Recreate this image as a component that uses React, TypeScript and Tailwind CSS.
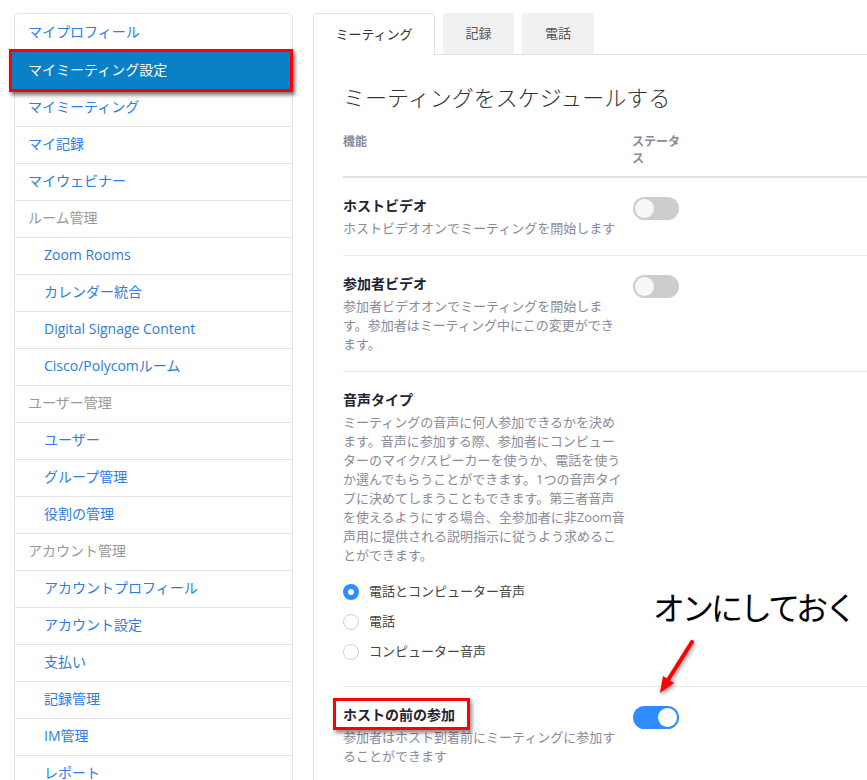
import { ReactNode } from "react";

type NavItem = { label: string; kind: "link" | "group" | "sub"; active?: boolean };

const navItems: NavItem[] = [
  { label: "マイプロフィール", kind: "link" },
  { label: "マイミーティング設定", kind: "link", active: true },
  { label: "マイミーティング", kind: "link" },
  { label: "マイ記録", kind: "link" },
  { label: "マイウェビナー", kind: "link" },
  { label: "ルーム管理", kind: "group" },
  { label: "Zoom Rooms", kind: "sub" },
  { label: "カレンダー統合", kind: "sub" },
  { label: "Digital Signage Content", kind: "sub" },
  { label: "Cisco/Polycomルーム", kind: "sub" },
  { label: "ユーザー管理", kind: "group" },
  { label: "ユーザー", kind: "sub" },
  { label: "グループ管理", kind: "sub" },
  { label: "役割の管理", kind: "sub" },
  { label: "アカウント管理", kind: "group" },
  { label: "アカウントプロフィール", kind: "sub" },
  { label: "アカウント設定", kind: "sub" },
  { label: "支払い", kind: "sub" },
  { label: "記録管理", kind: "sub" },
  { label: "IM管理", kind: "sub" },
  { label: "レポート", kind: "sub" },
];

const Sidebar = () => (
  <ul className="w-[279px] shrink-0 border border-[#e3e3e3] rounded-t-[5px] text-[14px]">
    {navItems.map((item, i) => {
      if (item.active) {
        return (
          <li key={item.label} className="relative h-[37px]">
            <div className="absolute -left-[6px] -right-px -top-[4px] -bottom-[2px] border-[3px] border-[#ff0000] bg-[#0a80c6] shadow-[2px_3px_4px_rgba(0,0,0,0.55)] flex items-center pl-[16px] pb-[2px] text-white">
              {item.label}
            </div>
          </li>
        );
      }
      const color = item.kind === "group" ? "text-[#999999]" : "text-[#2b7de4]";
      const pad = item.kind === "sub" ? "pl-[29px]" : "pl-[13px]";
      const h = i === 0 ? "h-[39px]" : "h-[37px]";
      return (
        <li key={item.label} className={`${h} border-b border-[#e3e3e3] flex items-center pb-[3px] ${pad} ${color}`}>
          {item.label}
        </li>
      );
    })}
  </ul>
);

const Toggle = ({ on }: { on?: boolean }) => (
  <div
    className={`w-[46px] h-[23px] rounded-full flex items-center px-[2px] ${
      on ? "bg-[#2d8cff] justify-end" : "bg-[#cdcdcd] justify-start"
    }`}
  >
    <div className={`w-[19px] h-[19px] rounded-full ${on ? "bg-white" : "bg-[#f8f8f8]"}`} />
  </div>
);

const Radio = ({ checked, label }: { checked?: boolean; label: string }) => (
  <div className="h-[30px] flex items-center gap-[10px] text-[13px] text-[#444]">
    {checked ? (
      <span className="w-[16px] h-[16px] rounded-full bg-[#2d8cff] flex items-center justify-center">
        <span className="w-[6px] h-[6px] rounded-full bg-white" />
      </span>
    ) : (
      <span className="w-[16px] h-[16px] rounded-full border border-[#cbd2dc] bg-white" />
    )}
    <span>{label}</span>
  </div>
);

const SettingRow = ({
  title,
  desc,
  on,
  noToggle,
  wide,
  children,
  last,
}: {
  title: ReactNode;
  desc: string;
  on?: boolean;
  noToggle?: boolean;
  wide?: boolean;
  children?: ReactNode;
  last?: boolean;
}) => (
  <div className={`flex pt-[18px] pb-[17px] ${last ? "" : "border-b border-[#ebebeb]"}`}>
    <div className="w-[290px] shrink-0">
      <div className="text-[14px] leading-[20px] font-bold text-[#232333]">{title}</div>
      <p className={`mt-[3px] ${wide ? "max-w-[284px]" : "max-w-[280px]"} text-[13px] leading-[19px] text-[#8a8a99]`}>
        {desc}
      </p>
      {children}
    </div>
    {!noToggle && (
      <div className="pt-px">
        <Toggle on={on} />
      </div>
    )}
  </div>
);

export default function App() {
  return (
    <div className="relative w-[867px] h-[780px] overflow-hidden bg-white flex items-start pt-[13px] pl-[14px] font-['Open_Sans','Noto_Sans_CJK_JP',sans-serif]">
      <Sidebar />

      <div className="ml-[20px] flex-1 min-w-0 self-stretch flex flex-col">
        {/* tabs */}
        <div className="flex items-end gap-[8px] h-[42px] border-b border-[#e0e0e0] text-[13px]">
          <div className="relative -mb-px h-[42px] w-[122px] border border-b-0 border-[#e0e0e0] rounded-t-[4px] bg-white flex items-center justify-center text-[#333]">
            ミーティング
          </div>
          <div className="h-[41px] w-[71px] rounded-t-[4px] bg-[#f0f1f3] flex items-center justify-center text-[#555]">
            記録
          </div>
          <div className="h-[41px] w-[72px] rounded-t-[4px] bg-[#f0f1f3] flex items-center justify-center text-[#555]">
            電話
          </div>
        </div>

        <div className="flex-1 border-l border-[#e0e0e0] pl-[29px]">
          <h2 className="mt-[27px] text-[22px] leading-[30px] font-light text-[#333]">ミーティングをスケジュールする</h2>

          <div className="mt-[21px] flex border-b-2 border-[#e3e3e3] pb-[9px] text-[12px] leading-[17px] font-bold text-[#8a8a99]">
            <div className="w-[289px] shrink-0">機能</div>
            <div className="w-[50px]">ステータス</div>
          </div>

          <SettingRow title="ホストビデオ" desc="ホストビデオオンでミーティングを開始します" />
          <SettingRow
            title="参加者ビデオ"
            desc="参加者ビデオオンでミーティングを開始します。参加者はミーティング中にこの変更ができます。"
          />
          <SettingRow
            noToggle
            wide
            title="音声タイプ"
            desc="ミーティングの音声に何人参加できるかを決めます。音声に参加する際、参加者にコンピューターのマイク/スピーカーを使うか、電話を使うか選んでもらうことができます。1つの音声タイプに決めてしまうこともできます。第三者音声を使えるようにする場合、全参加者に非Zoom音声用に提供される説明指示に従うよう求めることができます。"
          >
            <div className="mt-[12px] pb-[2px]">
              <Radio checked label="電話とコンピューター音声" />
              <Radio label="電話" />
              <Radio label="コンピューター音声" />
            </div>
          </SettingRow>
          <SettingRow
            last
            on
            title={
              <span className="relative inline-block">
                ホストの前の参加
                <span className="absolute -left-[10px] -right-[15px] -top-[7px] -bottom-[5px] border-[3px] border-[#ff0000] shadow-[2px_3px_4px_rgba(0,0,0,0.45)]" />
              </span>
            }
            desc="参加者はホスト到着前にミーティングに参加することができます"
          />
        </div>
      </div>

      {/* annotation */}
      <div className="absolute left-[653px] top-[588px] text-[32px] leading-[40px] tracking-[-3px] text-black">
        オンにしておく
      </div>
      <svg
        className="absolute left-[648px] top-[636px] drop-shadow-[1px_2px_2px_rgba(0,0,0,0.45)]"
        width="52"
        height="62"
        viewBox="0 0 52 62"
      >
        <line x1="44" y1="6" x2="20" y2="44" stroke="#ff0000" strokeWidth="4" strokeLinecap="round" />
        <polygon points="12,57 26,47 15,40" fill="#ff0000" />
      </svg>
    </div>
  );
}
